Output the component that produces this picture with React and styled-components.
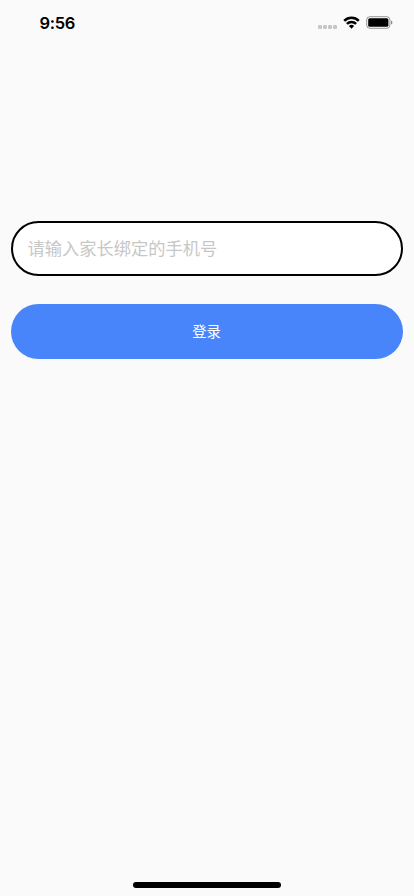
import React from 'react';
import styled, { createGlobalStyle } from 'styled-components';

const GlobalStyle = createGlobalStyle`
  body {
    margin: 0;
    background: #fafafa;
  }
`;

const Screen = styled.div`
  display: flex;
  flex-direction: column;
  box-sizing: border-box;
  width: 100%;
  height: 100vh;
  background: #fafafa;
  font-family: Inter, 'Noto Sans CJK SC', sans-serif;
`;

const StatusBar = styled.header`
  display: flex;
  align-items: center;
  justify-content: space-between;
  box-sizing: border-box;
  height: 46px;
  padding: 0 21px 0 39.5px;
`;

const Time = styled.span`
  font-size: 16.5px;
  font-weight: 600;
  letter-spacing: -0.3px;
  line-height: 20px;
  color: #000;
`;

const StatusIcons = styled.div`
  display: flex;
  align-items: center;
  padding-bottom: 1px;
`;

const Signal = styled.div`
  display: flex;
  gap: 1.6px;
  margin: 9px 6.4px 0 0;
`;

const SignalDot = styled.span`
  width: 3.4px;
  height: 3.4px;
  border-radius: 1.2px;
  background: #c6c6c6;
`;

const WifiIcon = styled.svg`
  width: 17px;
  height: 13px;
  margin-right: 6px;
`;

const BatteryIcon = styled.svg`
  width: 27px;
  height: 13px;
`;

const Form = styled.form`
  display: flex;
  flex: 1;
  flex-direction: column;
  gap: 27.6px;
  padding: 174.8px 11.04px 0;
`;

const PhoneInput = styled.input`
  box-sizing: border-box;
  width: 100%;
  height: 55.2px;
  margin: 0;
  padding: 0 14.5px 2px;
  border: 2px solid #000;
  border-radius: 27.6px;
  outline: none;
  background: #fff;
  font-family: 'Noto Sans CJK SC', sans-serif;
  font-size: 17.25px;
  color: #000;

  &::placeholder {
    color: #c7c7c7;
    opacity: 1;
  }
`;

const LoginButton = styled.button`
  width: 100%;
  height: 55.2px;
  margin: 0;
  padding: 0 1px 2px 0;
  border: 0;
  border-radius: 27.6px;
  background: #4884fa;
  font-family: 'Noto Sans CJK SC', sans-serif;
  font-size: 14.3px;
  color: #fff;
`;

const HomeIndicator = styled.div`
  align-self: center;
  width: 148px;
  height: 5.2px;
  margin-bottom: 8.4px;
  border-radius: 3px;
  background: #000;
`;

export default function App() {
  return (
    <>
      <GlobalStyle />
      <Screen>
        <StatusBar>
          <Time>9:56</Time>
          <StatusIcons>
            <Signal>
              <SignalDot />
              <SignalDot />
              <SignalDot />
              <SignalDot />
            </Signal>
            <WifiIcon viewBox="0 0 17 13">
              <path
                d="M1.2 4.8a10.4 10.4 0 0 1 14.6 0M3.9 7.8a6.6 6.6 0 0 1 9.2 0"
                fill="none"
                stroke="#000"
                strokeWidth="2.5"
              />
              <path d="M8.5 12.7 5.9 10a3.8 3.8 0 0 1 5.2 0z" fill="#000" />
            </WifiIcon>
            <BatteryIcon viewBox="0 0 27 13">
              <rect x="0.7" y="0.7" width="23.2" height="11.6" rx="3.2" fill="none" stroke="#000" strokeOpacity="0.4" />
              <rect x="2.2" y="2.2" width="20.2" height="8.6" rx="1.6" fill="#000" />
              <path d="M25 4.5v4c.8-.3 1.4-1.1 1.4-2s-.6-1.7-1.4-2z" fill="#000" fillOpacity="0.45" />
            </BatteryIcon>
          </StatusIcons>
        </StatusBar>
        <Form>
          <PhoneInput type="tel" placeholder="请输入家长绑定的手机号" />
          <LoginButton type="button">登录</LoginButton>
        </Form>
        <HomeIndicator />
      </Screen>
    </>
  );
}
